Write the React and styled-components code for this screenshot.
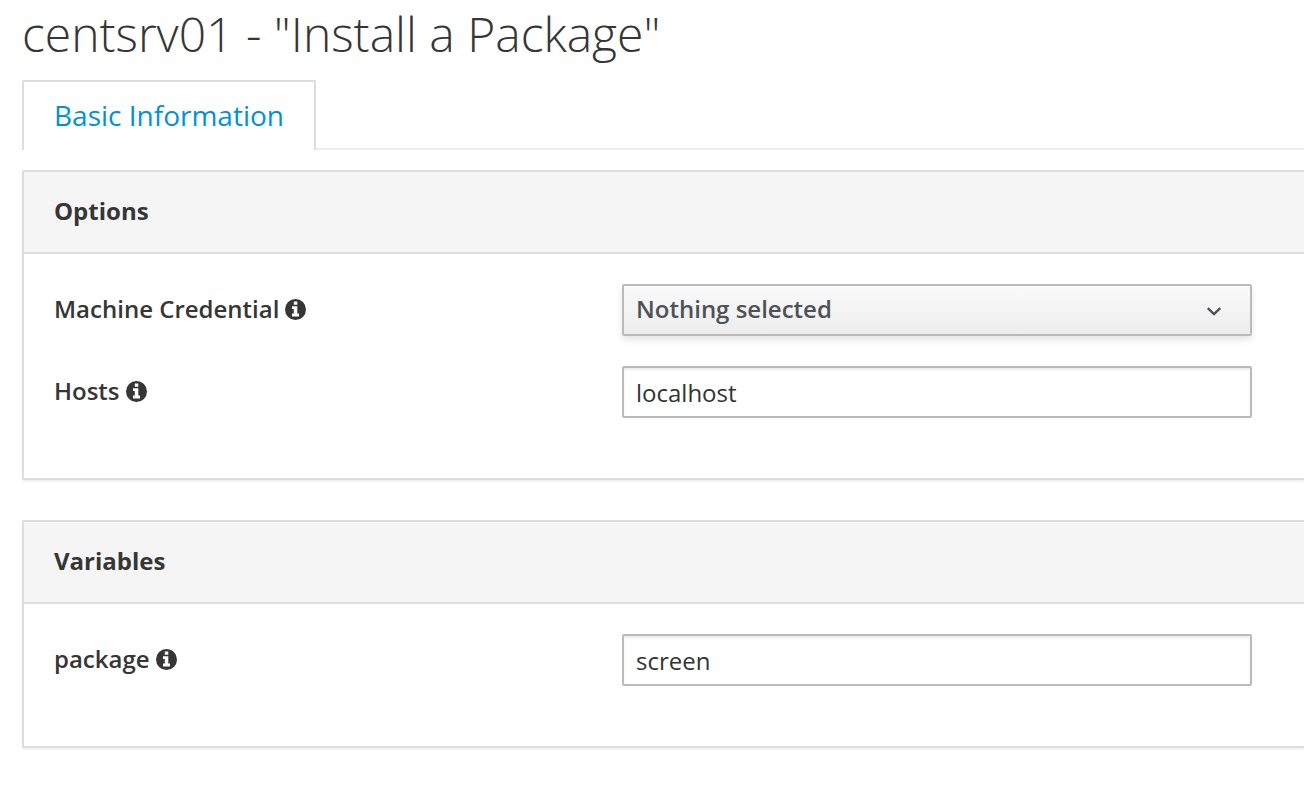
import React from "react";
import styled, { createGlobalStyle } from "styled-components";

const GlobalStyle = createGlobalStyle`
  *, *::before, *::after { box-sizing: border-box; }
  body {
    margin: 0;
    background: #fff;
    color: #363636;
    font-family: "Open Sans", sans-serif;
    font-size: 24px;
    line-height: 40px;
  }
`;

const Page = styled.main`
  display: flow-root;
  padding: 0 0 36px 22px;
  overflow: hidden;
`;

const Title = styled.h1`
  margin: 0;
  padding: 6px 0 18px;
  font-size: 48px;
  font-weight: 300;
  line-height: 56px;
`;

const Tabs = styled.nav`
  display: flex;
  margin-bottom: 20px;
  box-shadow: inset 0 -2px #ededec;
`;

const Tab = styled.a`
  height: 70px;
  padding: 13px 30px;
  border: 2px solid #dddddd;
  border-bottom: 0;
  border-radius: 2px 2px 0 0;
  background: #fff;
  color: #0093d3;
  font-size: 28px;
  text-decoration: none;
`;

const Panel = styled.section`
  border: 2px solid #dddddd;
  border-right: 0;
  border-radius: 2px 0 0 2px;
  box-shadow: 0 2px 2px rgba(0, 0, 0, 0.06);

  & + & {
    margin-top: 40px;
  }
`;

const PanelTitle = styled.h2`
  margin: 0;
  padding: 19px 30px 21px;
  border-bottom: 2px solid #dddddd;
  background: #f5f5f5;
  color: #363636;
  font-size: 24px;
  font-weight: 700;
`;

const PanelBody = styled.div`
  display: grid;
  gap: 30px;
  padding: 30px 52px 60px 30px;
`;

const Field = styled.div`
  display: grid;
  grid-template-columns: 568px 1fr;
`;

const Label = styled.label`
  display: flex;
  align-items: center;
  gap: 6px;
  height: 50px;
  font-weight: 600;
`;

const InfoSvg = styled.svg`
  width: 21px;
  height: 21px;
  fill: #363636;
`;

const TextInput = styled.input`
  width: 100%;
  height: 52px;
  padding: 0 12px;
  border: 2px solid #bbb;
  border-radius: 2px;
  background: #fff;
  box-shadow: inset 0 2px 2px rgba(3, 3, 3, 0.075);
  color: #333;
  font: inherit;
`;

const SelectWrap = styled.div`
  position: relative;
`;

const Select = styled.select`
  display: block;
  width: 100%;
  height: 52px;
  padding: 0 48px 2px 12px;
  appearance: none;
  border: 2px solid #bbb;
  border-radius: 2px;
  background: linear-gradient(#fafafa, #ededed);
  box-shadow: 0 4px 6px rgba(3, 3, 3, 0.1);
  color: #4d5258;
  font: inherit;
  font-weight: 600;
`;

const Chevron = styled.svg`
  position: absolute;
  top: 22px;
  right: 30px;
  width: 16px;
  height: 12px;
  fill: none;
  stroke: #4d5258;
  stroke-width: 2.4;
  pointer-events: none;
`;

function InfoIcon() {
  return (
    <InfoSvg viewBox="0 0 21 21" aria-hidden="true">
      <path
        fillRule="evenodd"
        d="M10.5 0a10.5 10.5 0 1 0 0 21a10.5 10.5 0 0 0 0-21zM8.8 2.6h3.5v3.1H8.8zM7 7.2h5.3v7.4H14V17.6H7v-3h1.8v-4.6H7z"
      />
    </InfoSvg>
  );
}

function TextField({ id, label, value }) {
  return (
    <Field>
      <Label htmlFor={id}>{label}<InfoIcon /></Label>
      <TextInput id={id} type="text" defaultValue={value} />
    </Field>
  );
}

export default function App() {
  return (
    <>
      <GlobalStyle />
      <Page>
        <Title>centsrv01 - "Install a Package"</Title>
        <Tabs><Tab href="#basic" aria-current="page">Basic Information</Tab></Tabs>
        <Panel id="basic">
          <PanelTitle>Options</PanelTitle>
          <PanelBody>
            <Field>
              <Label htmlFor="credential">Machine Credential<InfoIcon /></Label>
              <SelectWrap>
                <Select id="credential"><option>Nothing selected</option></Select>
                <Chevron viewBox="0 0 16 12" aria-hidden="true"><path d="M1.8 2.2l6.2 6 6.2-6" /></Chevron>
              </SelectWrap>
            </Field>
            <TextField id="hosts" label="Hosts" value="localhost" />
          </PanelBody>
        </Panel>
        <Panel>
          <PanelTitle>Variables</PanelTitle>
          <PanelBody>
            <TextField id="package" label="package" value="screen" />
          </PanelBody>
        </Panel>
      </Page>
    </>
  );
}
